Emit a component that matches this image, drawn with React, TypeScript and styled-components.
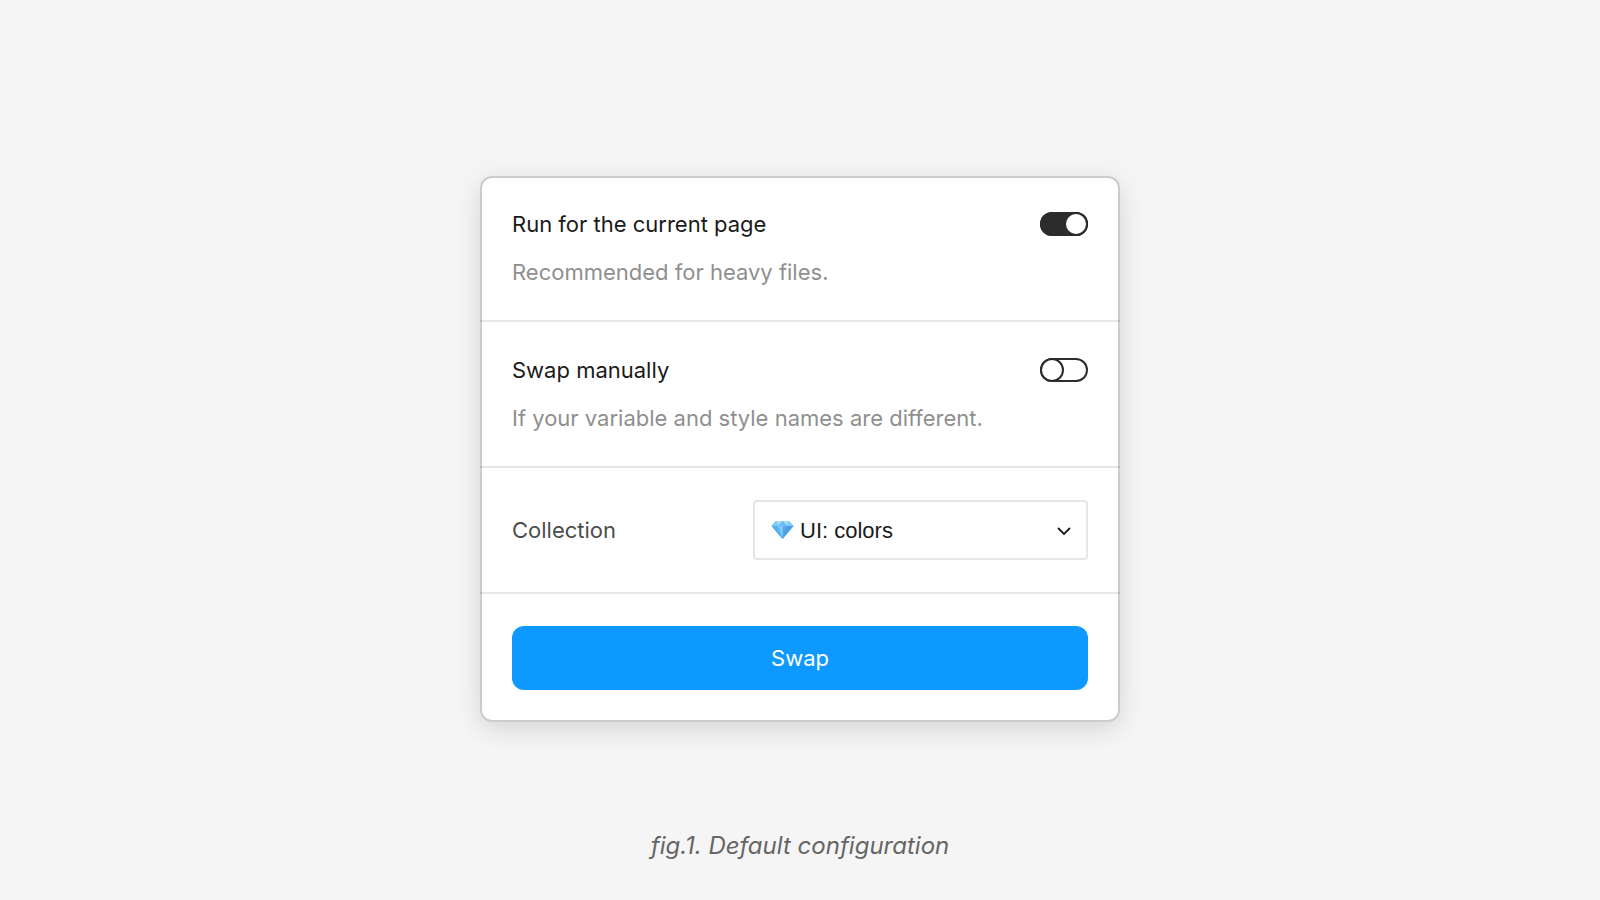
import React, { useId, useState } from "react";
import styled, { createGlobalStyle } from "styled-components";

const GlobalStyle = createGlobalStyle`
  *, *::before, *::after { box-sizing: border-box; }
  body {
    margin: 0;
    background: #f5f5f5;
    color: #1a1a1a;
    font-family: Inter, "Liberation Sans", sans-serif;
    font-size: 22px;
  }
`;

const Figure = styled.figure`
  display: flex;
  flex-direction: column;
  align-items: center;
  gap: 104px;
  min-height: 100vh;
  margin: 0;
  padding: 176px 24px 24px;
`;

const Caption = styled.figcaption`
  color: #666;
  font-size: 24px;
  font-style: italic;
  line-height: 40px;
  text-align: center;
`;

const Panel = styled.form`
  position: relative;
  width: 100%;
  max-width: 640px;
  border-radius: 12px;
  background: #fff;
  box-shadow: 0 4px 28px rgba(0, 0, 0, 0.08), 0 10px 24px rgba(0, 0, 0, 0.06);

  &::after {
    content: "";
    position: absolute;
    inset: 0;
    border: 2px solid rgba(0, 0, 0, 0.2);
    border-radius: 12px;
    pointer-events: none;
  }
`;

const Section = styled.section<{ $pad: number }>`
  padding: ${({ $pad }) => $pad}px 32px;

  & + & {
    border-top: 2px solid #e6e6e6;
  }
`;

const Row = styled.div`
  display: flex;
  align-items: center;
  justify-content: space-between;
`;

const Label = styled.label<{ $muted?: boolean }>`
  color: ${({ $muted }) => ($muted ? "#4d4d4d" : "#1a1a1a")};
  line-height: 48px;
`;

const Hint = styled.p`
  margin: 0;
  color: #8f8f8f;
  line-height: 48px;
`;

const Toggle = styled.input`
  appearance: none;
  display: flex;
  flex: none;
  width: 48px;
  height: 24px;
  margin: 0;
  border-radius: 12px;
  background: #fff;
  box-shadow: inset 0 0 0 2px #2c2c2c;
  cursor: pointer;

  &::before {
    content: "";
    width: 24px;
    height: 24px;
    border: 2px solid #2c2c2c;
    border-radius: 50%;
    background: #fff;
  }

  &:checked {
    justify-content: flex-end;
    background: #2c2c2c;
  }
`;

const SelectField = styled.div`
  position: relative;
  width: 335px;
`;

const Select = styled.select`
  appearance: none;
  display: block;
  width: 100%;
  height: 60px;
  padding: 0 48px 0 45px;
  border: 2px solid #e6e6e6;
  border-radius: 4px;
  background: #fff;
  color: #1a1a1a;
  font-family: "Liberation Sans", Arial, sans-serif;
  font-size: 22px;
`;

const FieldIcon = styled.svg<{ $side: "left" | "right" }>`
  position: absolute;
  top: 20px;
  ${({ $side }) => $side}: ${({ $side }) => ($side === "left" ? 18 : 16)}px;
  pointer-events: none;
`;

const PrimaryButton = styled.button`
  display: block;
  width: 100%;
  height: 64px;
  border: 0;
  border-radius: 12px;
  background: #0d99ff;
  color: #fff;
  font: inherit;
  cursor: pointer;
`;

function Gem() {
  return (
    <FieldIcon $side="left" width="23" height="20" viewBox="0 0 23 20" aria-hidden="true">
      <path d="M5 1h13l4.500 5L11.500 19 .500 6z" fill="#4fa9ee" />
      <path d="M5 1 .500 6H7z" fill="#7cc6f5" />
      <path d="M5 1 7 6l4.500-5z" fill="#a4dcfa" />
      <path d="M11.500 1 7 6h9z" fill="#6dbdf3" />
      <path d="M11.500 1H18l-2 5z" fill="#9dddfc" />
      <path d="M18 1l4.500 5H16z" fill="#84cdf6" />
      <path d="M.500 6H7l4.500 13z" fill="#56b0f0" />
      <path d="M7 6h5l-.500 13z" fill="#80cafa" />
      <path d="M16 6h6.500l-11 13z" fill="#4a9fe6" />
    </FieldIcon>
  );
}

function Chevron() {
  return (
    <FieldIcon $side="right" width="16" height="20" viewBox="0 0 16 20" aria-hidden="true">
      <path d="M2 8l6 6 6-6" fill="none" stroke="#1a1a1a" strokeWidth="1.8" />
    </FieldIcon>
  );
}

type ToggleSectionProps = { label: string; hint: string; initial: boolean };

function ToggleSection({ label, hint, initial }: ToggleSectionProps) {
  const id = useId();
  const [on, setOn] = useState(initial);
  return (
    <Section $pad={24}>
      <Row>
        <Label htmlFor={id}>{label}</Label>
        <Toggle
          id={id}
          type="checkbox"
          role="switch"
          aria-describedby={`${id}-hint`}
          checked={on}
          onChange={(event) => setOn(event.target.checked)}
        />
      </Row>
      <Hint id={`${id}-hint`}>{hint}</Hint>
    </Section>
  );
}

export default function App() {
  return (
    <>
      <GlobalStyle />
      <Figure>
        <Panel onSubmit={(event) => event.preventDefault()}>
          <ToggleSection label="Run for the current page" hint="Recommended for heavy files." initial />
          <ToggleSection
            label="Swap manually"
            hint="If your variable and style names are different."
            initial={false}
          />
          <Section $pad={32}>
            <Row>
              <Label htmlFor="collection" $muted>Collection</Label>
              <SelectField>
                <Select id="collection" defaultValue="colors">
                  <option value="colors">UI: colors</option>
                </Select>
                <Gem />
                <Chevron />
              </SelectField>
            </Row>
          </Section>
          <Section $pad={32}>
            <PrimaryButton type="submit">Swap</PrimaryButton>
          </Section>
        </Panel>
        <Caption>fig.1. Default configuration</Caption>
      </Figure>
    </>
  );
}
